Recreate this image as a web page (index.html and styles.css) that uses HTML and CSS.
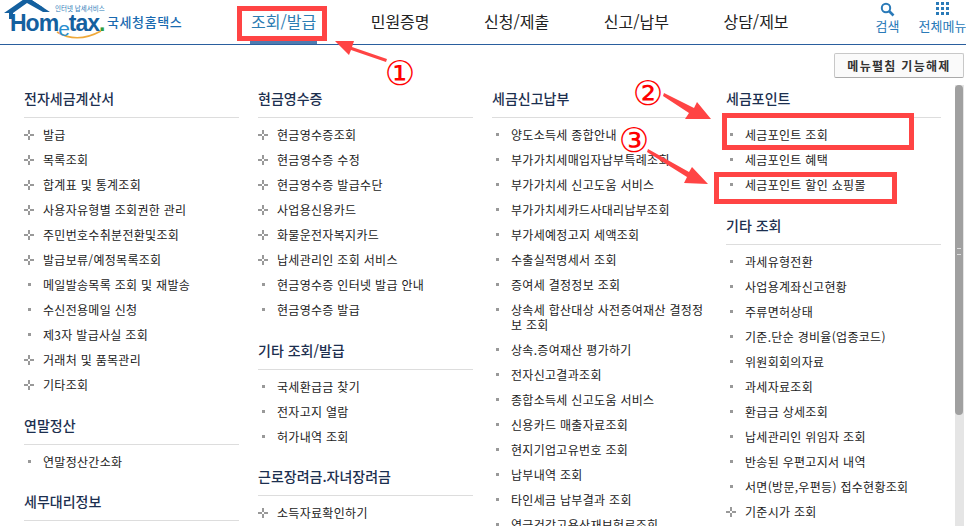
FILE: index.html
```html
<!DOCTYPE html>
<html lang="ko">
<head>
<meta charset="utf-8">
<title>Hometax</title>
<link rel="stylesheet" href="styles.css">
</head>
<body>
<div class="page">
  <header class="header">
    <a class="logo">
      <svg class="roof" width="56" height="20" viewBox="0 0 56 20"><path d="M4 13 L27 -3 L50 12 L43 12 L27 3 L13 13 L13 19 L9 19 L9 13 Z" fill="#14609f"/><path d="M20 7 L27 -3 L44 8 L27 2 Z" fill="#14609f"/></svg>
      <svg class="smile" width="50" height="12" viewBox="0 0 50 12"><path d="M2 2 Q22 14 46 1" fill="none" stroke="#f0a93a" stroke-width="1.6"/></svg>
      <span class="logo-small">인터넷 납세서비스</span>
      <span class="logo-word">Hom<span class="logo-e">e</span>tax<span class="logo-dot">.</span></span>
      <span class="logo-kr">국세청홈택스</span>
    </a>
    <nav class="nav">
      <a class="nav-item active">조회/발급</a>
      <a class="nav-item">민원증명</a>
      <a class="nav-item">신청/제출</a>
      <a class="nav-item">신고/납부</a>
      <a class="nav-item">상담/제보</a>
    </nav>
    <div class="tools">
      <a class="tool">
        <svg width="15" height="15" viewBox="0 0 15 15"><circle cx="6" cy="6" r="4.2" fill="none" stroke="#2a7ab8" stroke-width="2"/><path d="M9 9 L13.5 13.5" stroke="#2a7ab8" stroke-width="2.6"/></svg>
        <span>검색</span>
      </a>
      <a class="tool">
        <svg width="15" height="15" viewBox="0 0 15 15" fill="#2a7ab8"><rect x="1" y="0" width="3" height="3"/><rect x="6" y="0" width="3" height="3"/><rect x="11" y="0" width="3" height="3"/><rect x="1" y="5" width="3" height="3"/><rect x="6" y="5" width="3" height="3"/><rect x="11" y="5" width="3" height="3"/><rect x="1" y="10" width="3" height="3"/><rect x="6" y="10" width="3" height="3"/><rect x="11" y="10" width="3" height="3"/></svg>
        <span>전체메뉴</span>
      </a>
    </div>
  </header>

  <div class="toolbar"><button class="fold-btn">메뉴펼침 기능해제</button></div>

  <main class="main">
    <div class="columns">
      <div class="col">
        <h3 class="title">전자세금계산서</h3>
        <ul class="list">
          <li class="plus">발급</li>
          <li class="plus">목록조회</li>
          <li class="plus">합계표 및 통계조회</li>
          <li class="plus">사용자유형별 조회권한 관리</li>
          <li class="plus">주민번호수취분전환및조회</li>
          <li class="plus">발급보류/예정목록조회</li>
          <li class="sq">메일발송목록 조회 및 재발송</li>
          <li class="sq">수신전용메일 신청</li>
          <li class="sq">제3자 발급사실 조회</li>
          <li class="plus">거래처 및 품목관리</li>
          <li class="plus">기타조회</li>
        </ul>
        <h3 class="title">연말정산</h3>
        <ul class="list">
          <li class="sq">연말정산간소화</li>
        </ul>
        <h3 class="title">세무대리정보</h3>
      </div>
      <div class="col">
        <h3 class="title">현금영수증</h3>
        <ul class="list">
          <li class="plus">현금영수증조회</li>
          <li class="plus">현금영수증 수정</li>
          <li class="plus">현금영수증 발급수단</li>
          <li class="plus">사업용신용카드</li>
          <li class="plus">화물운전자복지카드</li>
          <li class="plus">납세관리인 조회 서비스</li>
          <li class="sq">현금영수증 인터넷 발급 안내</li>
          <li class="sq">현금영수증 발급</li>
        </ul>
        <h3 class="title">기타 조회/발급</h3>
        <ul class="list">
          <li class="sq">국세환급금 찾기</li>
          <li class="sq">전자고지 열람</li>
          <li class="sq">허가내역 조회</li>
        </ul>
        <h3 class="title">근로장려금.자녀장려금</h3>
        <ul class="list">
          <li class="plus">소득자료확인하기</li>
        </ul>
      </div>
      <div class="col">
        <h3 class="title">세금신고납부</h3>
        <ul class="list">
          <li class="sq">양도소득세 종합안내</li>
          <li class="sq">부가가치세매입자납부특례조회</li>
          <li class="sq">부가가치세 신고도움 서비스</li>
          <li class="sq">부가가치세카드사대리납부조회</li>
          <li class="sq">부가세예정고지 세액조회</li>
          <li class="sq">수출실적명세서 조회</li>
          <li class="sq">증여세 결정정보 조회</li>
          <li class="sq">상속세 합산대상 사전증여재산 결정정보 조회</li>
          <li class="sq">상속.증여재산 평가하기</li>
          <li class="sq">전자신고결과조회</li>
          <li class="sq">종합소득세 신고도움 서비스</li>
          <li class="sq">신용카드 매출자료조회</li>
          <li class="sq">현지기업고유번호 조회</li>
          <li class="sq">납부내역 조회</li>
          <li class="sq">타인세금 납부결과 조회</li>
          <li class="sq">연금건강고용산재보험료조회</li>
        </ul>
      </div>
      <div class="col">
        <h3 class="title">세금포인트</h3>
        <ul class="list">
          <li class="sq">세금포인트 조회</li>
          <li class="sq">세금포인트 혜택</li>
          <li class="sq">세금포인트 할인 쇼핑몰</li>
        </ul>
        <h3 class="title">기타 조회</h3>
        <ul class="list">
          <li class="sq">과세유형전환</li>
          <li class="sq">사업용계좌신고현황</li>
          <li class="sq">주류면허상태</li>
          <li class="sq">기준.단순 경비율(업종코드)</li>
          <li class="sq">위원회회의자료</li>
          <li class="sq">과세자료조회</li>
          <li class="sq">환급금 상세조회</li>
          <li class="sq">납세관리인 위임자 조회</li>
          <li class="sq">반송된 우편고지서 내역</li>
          <li class="sq">서면(방문,우편등) 접수현황조회</li>
          <li class="plus">기준시가 조회</li>
        </ul>
      </div>
    </div>
    <div class="scrollbar"><div class="thumb"></div></div>
  </main>

  <svg class="notes" width="966" height="526" viewBox="0 0 966 526">
    <g fill="none" stroke="#ff4444" stroke-width="5">
      <rect x="239.500" y="8.500" width="85" height="30"/>
      <rect x="724.500" y="115.500" width="187" height="32"/>
      <rect x="716.500" y="174.500" width="178" height="27"/>
    </g>
    <g fill="#ff4444">
      <path d="M387 59 L352 47 L354 41 L335 41 L349 55 L351 50 L386 62 Z"/>
      <path d="M664 93 L694 108 L697 102 L711 119 L685 119 L689 113 L663 96 Z"/>
      <path d="M648 149 L689 172 L692 167 L708 184 L684 183 L687 177 L647 152 Z"/>
    </g>
    <g class="note-num">
      <text x="400" y="85">①</text>
      <text x="648" y="105">②</text>
      <text x="634" y="152">③</text>
    </g>
  </svg>
</div>
</body>
</html>
```

FILE: styles.css
```css
* { box-sizing: border-box; }
html, body { margin: 0; padding: 0; background: #fff; }
body { font-family: "Noto Sans CJK KR", "Noto Sans", sans-serif; color: #222; overflow: hidden; }
.page { position: relative; width: 966px; height: 526px; overflow: hidden; }

.header { display: flex; height: 45px; border-bottom: 1px solid #2a5f9e; }
.logo { position: relative; display: block; width: 251px; flex: none; }
.roof { position: absolute; left: 0; top: 0; }
.smile { position: absolute; left: 55px; top: 30px; }
.logo-small { position: absolute; left: 55px; top: 3px; font-size: 6.5px; line-height: 10px; color: #2a7ab8; white-space: nowrap; }
.logo-word { position: absolute; left: 10px; top: 10px; font-family: "Liberation Sans", sans-serif; font-weight: 700; font-size: 23px; line-height: 26px; color: #14609f; letter-spacing: -1px; white-space: nowrap; }
.logo-e { position: relative; top: 5px; color: #2a8ed0; font-weight: 400; font-size: 21px; }
.logo-dot { color: #2f9e44; }
.logo-kr { position: absolute; left: 107px; top: 12px; font-size: 13px; line-height: 19px; font-weight: 500; color: #1a6ab0; white-space: nowrap; letter-spacing: 0.6px; }

.nav { display: flex; gap: 54.5px; }
.nav-item { position: relative; display: block; font-size: 16px; line-height: 24px; padding-top: 9px; color: #222; white-space: nowrap; }
.nav-item.active { color: #2d7db3; }
.nav-item.active::after { content: ""; position: absolute; left: -1px; right: -1px; bottom: 0; height: 4px; background: #4f7bb0; }

.tools { display: flex; gap: 19px; margin-left: 87px; }
.tool { display: flex; flex-direction: column; align-items: center; font-size: 13px; line-height: 17px; color: #2a7ab8; white-space: nowrap; padding-top: 2px; }
.tool svg { display: block; }

.toolbar { display: flex; justify-content: flex-end; height: 40px; padding: 8px 2px 0 0; }
.fold-btn { width: 130px; height: 25px; padding: 0; border: 1px solid #c8c8c8; border-bottom-color: #aaa; border-radius: 2px; background: #fafafa; font-family: inherit; font-size: 12px; font-weight: 700; letter-spacing: 1.3px; color: #333; }

.main { display: flex; justify-content: space-between; height: 441px; padding-right: 2px; overflow: hidden; }
.columns { display: grid; grid-template-columns: repeat(4, 215px); column-gap: 19px; align-items: start; padding: 3px 0 0 24px; }
.title { margin: 17.5px 0 0; height: 30px; padding-bottom: 9px; border-bottom: 1px solid #ddd; font-size: 14px; line-height: 20px; font-weight: 500; color: #1c2f4f; white-space: nowrap; }
.title:first-child { margin-top: 0; }
.list { list-style: none; margin: 4px 0 0; padding: 0; }
.list li { position: relative; padding: 5px 0 5px 19px; font-size: 12px; line-height: 15px; letter-spacing: 0.3px; word-break: break-all; color: #222; }
.list li::before { content: ""; position: absolute; }
.list li.sq::before { left: 4px; top: 11px; width: 3px; height: 3px; background: #999; }
.list li.plus::before { left: 0; top: 8px; width: 10px; height: 10px;
  background:
    linear-gradient(#999, #999) 4px 0 / 2px 4px no-repeat,
    linear-gradient(#999, #999) 4px 6px / 2px 4px no-repeat,
    linear-gradient(#999, #999) 0 4px / 4px 2px no-repeat,
    linear-gradient(#999, #999) 6px 4px / 4px 2px no-repeat; }

.scrollbar { flex: none; width: 9px; height: 100%; background: #e5e5e5; }
.thumb { position: relative; width: 8px; height: 330px; background: #a0a0a0; border-radius: 4px; }
.thumb::after { content: ""; position: absolute; left: 2px; top: 163px; width: 4px; height: 5px; border-top: 1px solid #ddd; border-bottom: 1px solid #ddd; }

.notes { position: absolute; left: 0; top: 0; pointer-events: none; }
.note-num text { font-family: "DejaVu Sans", sans-serif; font-size: 34px; fill: #f00; text-anchor: middle; }
```
